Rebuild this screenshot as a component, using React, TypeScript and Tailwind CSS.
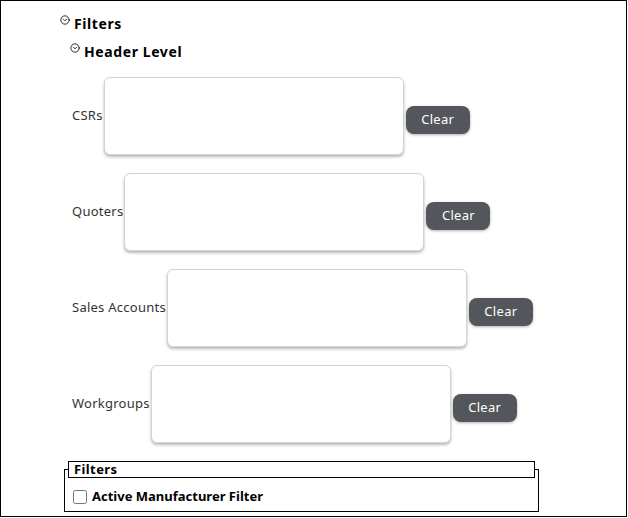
import { CircleChevronDown } from "lucide-react";

const rows = ["CSRs", "Quoters", "Sales Accounts", "Workgroups"];

function FilterRow({ label }: { label: string }) {
  return (
    <div className="flex items-center mb-[18px]">
      <span className="text-[13px] text-[#333] tracking-[0.25px] mr-[1px]">{label}</span>
      <div className="w-[300px] h-[78px] bg-white border border-[#d4d4d4] rounded-[6px] shadow-[0_2px_3px_rgba(0,0,0,0.28)]" />
      <button className="ml-[2px] mt-[7px] w-[64px] h-[28px] bg-[#53565b] text-white text-[13px] tracking-[0.3px] rounded-[8px] shadow-[0_1px_3px_rgba(0,0,0,0.3)]">
        Clear
      </button>
    </div>
  );
}

export default function App() {
  return (
    <div className="w-[627px] h-[517px] border border-black bg-white font-['Noto_Sans',sans-serif] text-black">
      <div className="pl-[59px] pt-[11px]">
        <div className="flex items-center h-[22px]">
          <CircleChevronDown size={10} strokeWidth={2} className="mb-[6px]" />
          <span className="ml-[4px] text-[14px] font-bold tracking-[0.6px]">Filters</span>
        </div>
        <div className="pl-[10px] mt-[6px]">
          <div className="flex items-center h-[22px]">
            <CircleChevronDown size={10} strokeWidth={2} className="mb-[6px]" />
            <span className="ml-[4px] text-[14px] font-bold tracking-[0.6px]">Header Level</span>
          </div>
          <div className="pl-[2px] mt-[15px]">
            {rows.map((r) => (
              <FilterRow key={r} label={r} />
            ))}
          </div>
        </div>
        <fieldset className="ml-[4px] w-[475px] border border-black px-[3px] pb-[4px]">
          <legend className="w-full border border-black text-[13px] font-bold tracking-[0.4px] leading-[15px] px-[5px]">
            Filters
          </legend>
          <label className="flex items-center mt-[9px] ml-[5px] text-[13px] font-bold">
            <input type="checkbox" className="w-[14px] h-[14px] rounded-[3px] mr-[5px]" />
            Active Manufacturer Filter
          </label>
        </fieldset>
      </div>
    </div>
  );
}
